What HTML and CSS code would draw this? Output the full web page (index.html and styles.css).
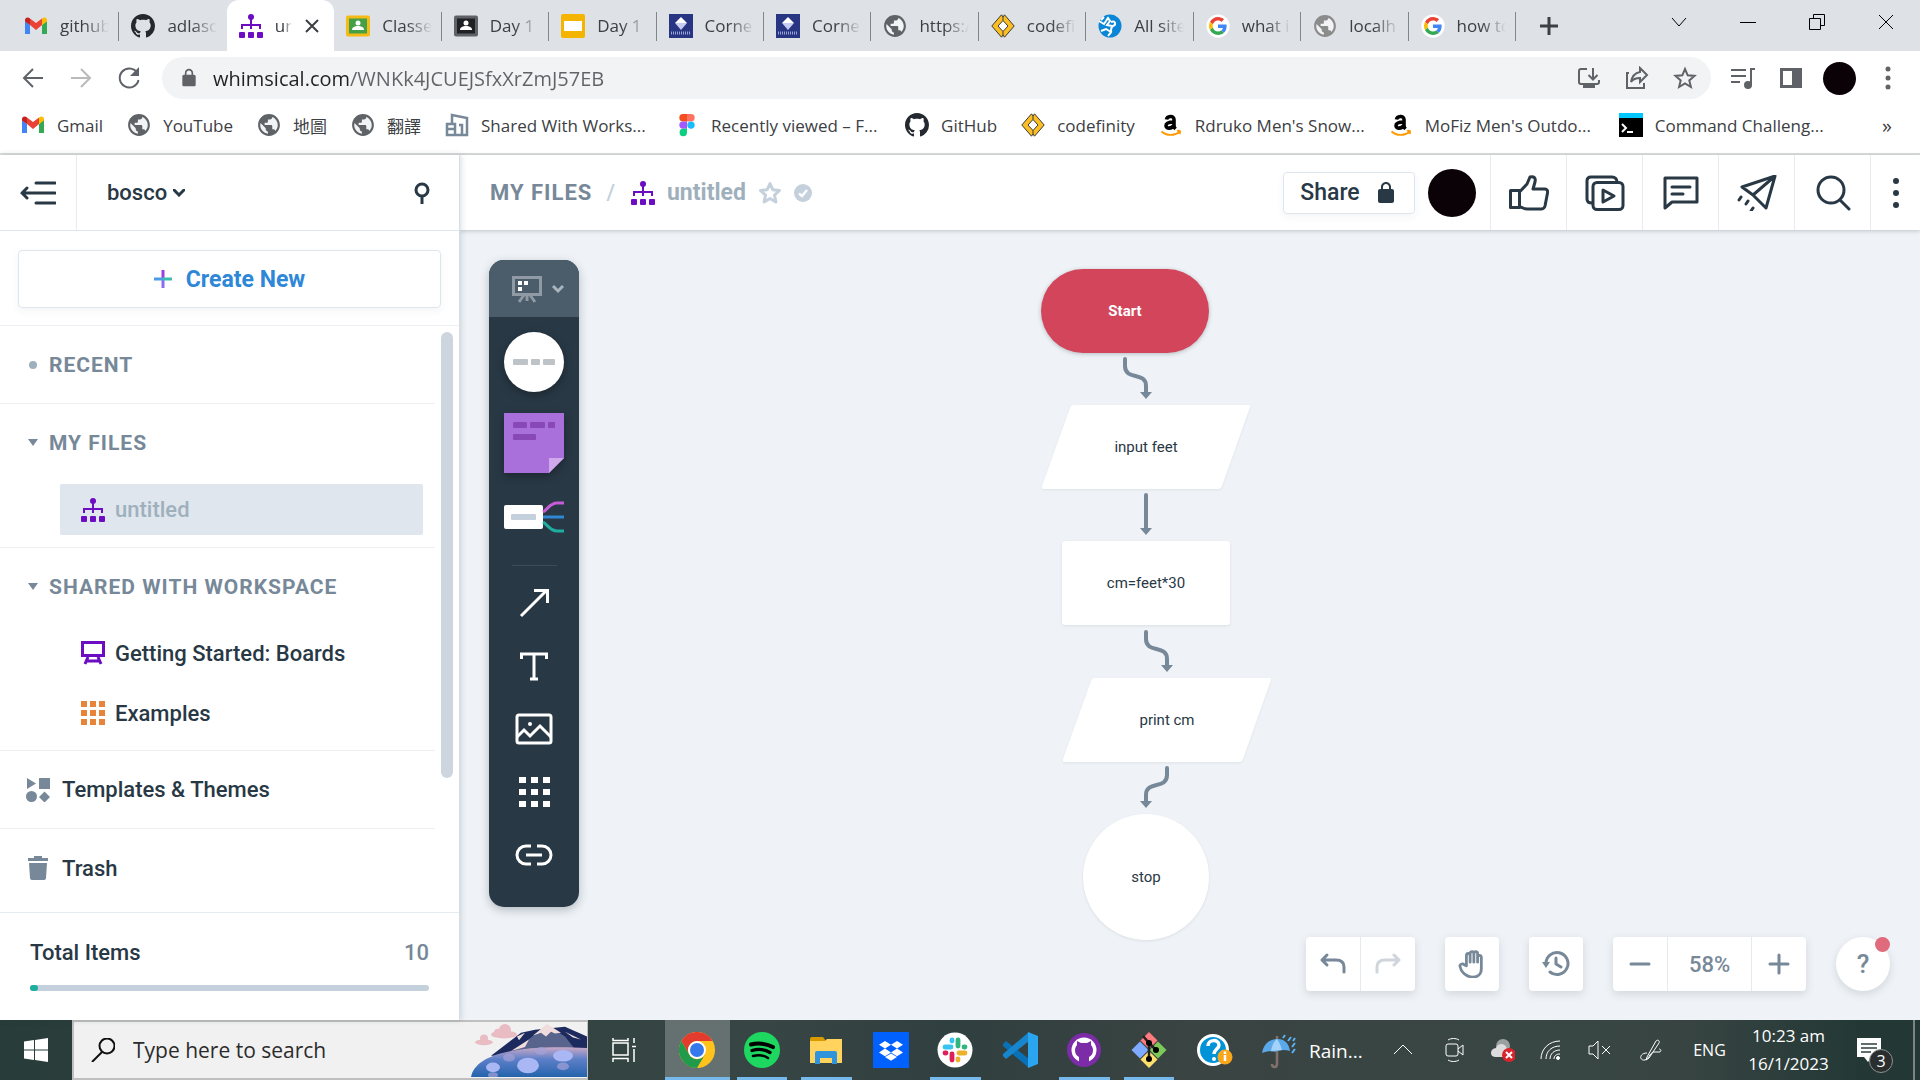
FILE: index.html
```html
<!DOCTYPE html>
<html lang="en">
<head>
<meta charset="utf-8">
<title>untitled</title>
<link rel="stylesheet" href="styles.css">
</head>
<body>
<svg class="defs" aria-hidden="true">
  <symbol id="gmail" viewBox="0 0 24 24"><path fill="#4285f4" d="M1 6v14h5v-9L1 7z"/><path fill="#34a853" d="M18 11v9h5V6z"/><path fill="#ea4335" d="M6 4.500l6 4.500 6-4.500V11l-6 5-6-5z"/><path fill="#c5221f" d="M1 6c0-2.500 3-3.500 5-1.500V11L1 7.500z"/><path fill="#fbbc04" d="M23 6c0-2.500-3-3.500-5-1.500V11l5-3.500z"/></symbol>
  <symbol id="github" viewBox="0 0 16 16"><path d="M8 0C3.580 0 0 3.580 0 8c0 3.540 2.290 6.530 5.470 7.590.4.070.55-.17.55-.38 0-.19-.01-.82-.01-1.490-2.010.37-2.530-.49-2.690-.94-.09-.23-.48-.94-.82-1.130-.28-.15-.68-.52-.01-.53.63-.01 1.080.58 1.230.82.72 1.210 1.870.87 2.330.66.07-.52.28-.87.51-1.070-1.780-.2-3.640-.89-3.640-3.950 0-.87.31-1.590.82-2.150-.08-.2-.36-1.020.08-2.120 0 0 .67-.21 2.200.82.64-.18 1.320-.27 2-.27s1.360.09 2 .27c1.530-1.040 2.200-.82 2.200-.82.44 1.100.16 1.920.08 2.120.51.56.82 1.270.82 2.150 0 3.070-1.870 3.750-3.650 3.950.29.25.54.73.54 1.480 0 1.070-.01 1.930-.01 2.200 0 .21.15.46.55.38A8.010 8.010 0 0 0 16 8c0-4.420-3.580-8-8-8z"/></symbol>
  <symbol id="flow" viewBox="0 0 24 24"><circle cx="12" cy="3" r="3"/><path d="M11 5h2v5h9v5h-2v-3h-7v3h-2v-3H4v3H2v-5h9z"/><rect x="0" y="18" width="6" height="6" rx="1"/><rect x="9" y="18" width="6" height="6" rx="1"/><rect x="18" y="18" width="6" height="6" rx="1"/></symbol>
  <symbol id="globe" viewBox="1 1 22 22"><circle cx="12" cy="12" r="9" fill="#f1f3f4"/><path d="M12 2C6.480 2 2 6.480 2 12s4.480 10 10 10 10-4.480 10-10S17.520 2 12 2zm-1 17.930c-3.950-.49-7-3.850-7-7.930 0-.62.08-1.210.21-1.790L9 15v1c0 1.100.9 2 2 2v1.930zm6.900-2.540c-.26-.81-1-1.390-1.900-1.390h-1v-3c0-.55-.45-1-1-1H8v-2h2c.55 0 1-.45 1-1V7h2c1.100 0 2-.9 2-2v-.41c2.930 1.190 5 4.060 5 7.410 0 2.080-.8 3.970-2.100 5.390z"/></symbol>
  <symbol id="codef" viewBox="0 0 24 24"><path fill="#fbbf24" stroke="#3a3a3a" d="M10.500.800L.800 12l9.700 11.200L12 21l1.500 2.200L23.200 12 13.500.800 12 3z"/><path fill="#fff" stroke="#3a3a3a" d="M12 6.500L7 12l5 5.500 5-5.500z"/><path stroke="#3a3a3a" d="M12 3v3.500M12 17.500V21"/></symbol>
  <symbol id="amazon" viewBox="0 0 24 24"><path fill="none" stroke="#000" stroke-width="3.600" d="M7.500 6.500C8 3 15 2 15 6.500V13c0 1.500.5 2 1.500 3M15 9c-4 0-8 .5-8 3.700s5.500 3.500 8-.7"/><path fill="none" stroke="#ff9900" stroke-width="1.800" d="M2.500 18.500c5 4.500 13 4.500 18 .5M18 18c3-1 4 0 2.500 3"/></symbol>
  <symbol id="google" viewBox="0 0 64 64"><circle cx="32" cy="32" r="31" fill="#fff"/><g transform="translate(8 8)"><path fill="#ea4335" d="M24 9.500c3.540 0 6.710 1.220 9.210 3.600l6.850-6.850C35.900 2.380 30.470 0 24 0 14.620 0 6.510 5.380 2.560 13.220l7.980 6.190C12.430 13.720 17.740 9.500 24 9.500z"/><path fill="#4285f4" d="M46.980 24.550c0-1.570-.15-3.090-.38-4.550H24v9.020h12.940c-.58 2.960-2.260 5.480-4.780 7.180l7.730 6c4.510-4.180 7.090-10.360 7.090-17.650z"/><path fill="#fbbc05" d="M10.530 28.590c-.48-1.450-.76-2.990-.76-4.590s.27-3.140.76-4.590l-7.980-6.190C.92 16.460 0 20.120 0 24c0 3.880.92 7.540 2.560 10.780l7.970-6.190z"/><path fill="#34a853" d="M24 48c6.480 0 11.930-2.130 15.890-5.810l-7.730-6c-2.150 1.450-4.920 2.300-8.160 2.300-6.260 0-11.570-4.220-13.470-9.910l-7.980 6.190C6.510 42.620 14.620 48 24 48z"/></g></symbol>
  <symbol id="corner" viewBox="0 0 24 24"><path fill="#283583" d="M0 0h24v24H0z"/><path fill="#fff" d="M12 3L6 9h12z"/><path fill="#c6cdf0" d="M6 9h12l-6 7z"/><path fill="none" stroke="#9aa3d6" stroke-dasharray="1 1" stroke-width="3" d="M2 19h20"/></symbol>
  <symbol id="class-green" viewBox="0 0 24 24"><rect width="24" height="21" y="1.500" rx="2" fill="#f5ba15"/><path fill="#43a047" d="M3 4.500h18v15H3z"/><circle cx="12" cy="9" r="2.500" fill="#fff"/><path fill="#fff" d="M6 16c0-3 3-4 6-4s6 1 6 4z"/></symbol>
  <symbol id="class-dark" viewBox="0 0 24 24"><rect width="24" height="21" y="1.500" rx="2" fill="#5f6368"/><path fill="#202124" d="M3 4.500h18v15H3z"/><circle cx="12" cy="9" r="2.500" fill="#fff"/><path fill="#fff" d="M6 16c0-3 3-4 6-4s6 1 6 4z"/></symbol>
  <symbol id="lock" viewBox="0 0 24 24"><path d="M18 8h-1V6c0-2.760-2.240-5-5-5S7 3.240 7 6v2H6c-1.100 0-2 .9-2 2v10c0 1.100.9 2 2 2h12c1.100 0 2-.9 2-2V10c0-1.100-.9-2-2-2zM9 8V6c0-1.660 1.340-3 3-3s3 1.340 3 3v2z"/></symbol>
</svg>

<header class="browser">
  <div class="tabstrip">
    <nav class="tabs" aria-label="Tabs">
      <button class="tab"><svg class="i24"><use href="#gmail"/></svg><span>github</span></button>
      <button class="tab no-line"><svg class="i24 gh"><use href="#github"/></svg><span>adlasc</span></button>
      <button class="tab active"><svg class="i24 purple"><use href="#flow"/></svg><span>unt</span><svg class="i16 close" viewBox="0 0 16 16"><path d="M2 2l12 12M14 2L2 14"/></svg></button>
      <button class="tab"><svg class="i24"><use href="#class-green"/></svg><span>Classe</span></button>
      <button class="tab"><svg class="i24"><use href="#class-dark"/></svg><span>Day 1</span></button>
      <button class="tab"><svg class="i24" viewBox="0 0 24 24"><rect width="24" height="24" rx="2" fill="#f5b400"/><path fill="#fff" d="M3 7h18v10H3z"/></svg><span>Day 1</span></button>
      <button class="tab"><svg class="i24"><use href="#corner"/></svg><span>Corne</span></button>
      <button class="tab"><svg class="i24"><use href="#corner"/></svg><span>Corne</span></button>
      <button class="tab"><svg class="i24 grey"><use href="#globe"/></svg><span>https:/</span></button>
      <button class="tab"><svg class="i24"><use href="#codef"/></svg><span>codefi</span></button>
      <button class="tab"><svg class="i24" viewBox="0 0 24 24"><circle cx="12" cy="12" r="11.500" fill="#0b86d6"/><path fill="none" stroke="#fff" stroke-width="2" d="M1 7l5 3 4-6 2 3-3 4 5 1M3 17l5-2 5 3-3 4M13 8c5-2 5 3 2 4s-1 5-3 8M6 3l-3 3"/></svg><span>All site</span></button>
      <button class="tab"><svg class="i24"><use href="#google"/></svg><span>what i</span></button>
      <button class="tab"><svg class="i24 light"><use href="#globe"/></svg><span>localh</span></button>
      <button class="tab"><svg class="i24"><use href="#google"/></svg><span>how to</span></button>
    </nav>
    <button class="newtab" aria-label="New tab"><svg class="i20" viewBox="0 0 20 20"><path d="M10 1v18M1 10h18"/></svg></button>
    <div class="wincontrols">
      <button aria-label="Search tabs"><svg class="i16" viewBox="0 0 16 16"><path d="M1 4l7 8 7-8"/></svg></button>
      <button aria-label="Minimize"><svg class="i16" viewBox="0 0 16 16"><path d="M0 8.500h16"/></svg></button>
      <button aria-label="Restore"><svg class="i16" viewBox="0 0 16 16"><path d="M.5 4.500h11v11H.5zM4.500 4V.5h11v11H12"/></svg></button>
      <button aria-label="Close"><svg class="i16" viewBox="0 0 16 16"><path d="M1 1l14 14M15 1L1 15"/></svg></button>
    </div>
  </div>

  <div class="toolbar">
    <button aria-label="Back"><svg class="i24 st" viewBox="0 0 24 24"><path d="M22 12H3M12 3l-9 9 9 9"/></svg></button>
    <button aria-label="Forward"><svg class="i24 st dim" viewBox="0 0 24 24"><path d="M2 12h19M12 3l9 9-9 9"/></svg></button>
    <button aria-label="Reload"><svg class="i24 st" viewBox="0 0 24 24"><path d="M20 6.500A9.500 9.500 0 1 0 21.500 14"/><path fill="#5f6368" stroke="none" d="M22 1v9h-9z"/></svg></button>
    <div class="omnibox">
      <svg class="i20 grey"><use href="#lock"/></svg>
      <input class="url" aria-label="Address" value="whimsical.com/WNKk4JCUEJSfxXrZmJ57EB">
      <button aria-label="Install"><svg class="i24 st" viewBox="0 0 24 24"><path d="M10 3H4a2 2 0 0 0-2 2v11a2 2 0 0 0 2 2h16a2 2 0 0 0 2-2v-2M16 2v11M11.500 9l4.500 4.500L20.500 9"/><path stroke-width="4" d="M6 20h12"/></svg></button>
      <button aria-label="Share page"><svg class="i24 st" viewBox="0 0 24 24"><path d="M4 7H2v15h17v-5M15 2l7 7-7 7v-4c-4 0-7 1-9 4 1-6 4-9 9-10z"/></svg></button>
      <button aria-label="Bookmark"><svg class="i24 st" viewBox="0 0 24 24"><path d="M12 3l2.700 6.300 6.800.6-5.200 4.500 1.600 6.600-5.900-3.500L6.100 21l1.600-6.600-5.200-4.500 6.800-.6z"/></svg></button>
    </div>
    <button aria-label="Media"><svg class="i24 st" viewBox="0 0 24 24"><path d="M0 4h15M0 10h15M0 16h9M20 20V3h4"/><circle cx="17" cy="19" r="3" fill="#5f6368"/></svg></button>
    <button aria-label="Side panel"><svg class="i24" viewBox="0 0 24 24"><path fill="#5f6368" d="M1 2h22v20H1zm3 3v14h9V5z" fill-rule="evenodd"/></svg></button>
    <button class="avatar small" aria-label="Profile"></button>
    <button aria-label="Menu"><svg class="i24" viewBox="0 0 24 24" fill="#5f6368"><circle cx="12" cy="3" r="2.500"/><circle cx="12" cy="12" r="2.500"/><circle cx="12" cy="21" r="2.500"/></svg></button>
  </div>

  <nav class="bookmarks" aria-label="Bookmarks">
    <a href="#"><svg class="i24"><use href="#gmail"/></svg><span>Gmail</span></a>
    <a href="#"><svg class="i24 grey"><use href="#globe"/></svg><span>YouTube</span></a>
    <a href="#"><svg class="i24 grey"><use href="#globe"/></svg><span>地圖</span></a>
    <a href="#"><svg class="i24 grey"><use href="#globe"/></svg><span>翻譯</span></a>
    <a href="#"><svg class="i24" viewBox="0 0 24 24" fill="none" stroke="#778899" stroke-width="2.500"><path d="M7 11V2l15 3v17H2V11h8v11M3 16h7M14 12h3v10"/></svg><span class="long">Shared With Works...</span></a>
    <a href="#"><svg class="i24" viewBox="0 0 24 24"><path fill="#f24e1e" d="M12 1H8a3.700 3.700 0 0 0 0 7.400h4z"/><path fill="#ff7262" d="M12 1h4a3.700 3.700 0 0 1 0 7.400h-4z"/><path fill="#a259ff" d="M12 8.400H8a3.700 3.700 0 0 0 0 7.400h4z"/><circle cx="16" cy="12.100" r="3.700" fill="#1abcfe"/><path fill="#0acf83" d="M12 15.800H8a3.700 3.700 0 1 0 4 3.700z"/></svg><span class="long">Recently viewed – F...</span></a>
    <a href="#"><svg class="i24 gh"><use href="#github"/></svg><span>GitHub</span></a>
    <a href="#"><svg class="i24"><use href="#codef"/></svg><span>codefinity</span></a>
    <a href="#"><svg class="i24"><use href="#amazon"/></svg><span class="long">Rdruko Men's Snow...</span></a>
    <a href="#"><svg class="i24"><use href="#amazon"/></svg><span class="long">MoFiz Men's Outdo...</span></a>
    <a href="#"><svg class="i24" viewBox="0 0 24 24"><path d="M0 0h24v24H0z"/><path fill="#00c8ff" d="M0 0h24v5H0z"/><path fill="none" stroke="#fff" stroke-width="2" d="M3 11l4 4-4 4M8 19h6"/></svg><span class="long">Command Challeng...</span></a>
    <button class="more">»</button>
  </nav>
</header>

<div class="app">
  <aside class="sidebar">
    <div class="side-head">
      <button class="collapse" aria-label="Collapse sidebar"><svg viewBox="0 0 36 24"><path d="M16 2h19M2 12h33M16 22h19M7 7l-5 5 5 5"/></svg></button>
      <button class="workspace">bosco <svg viewBox="0 0 12 8"><path d="M1 1l5 5 5-5"/></svg></button>
      <button class="pin" aria-label="Pin"><svg viewBox="0 0 16 22"><circle cx="8" cy="8" r="6"/><path d="M8 14v8"/></svg></button>
    </div>
    <div class="create-wrap">
      <button class="create"><svg viewBox="0 0 18 18"><path stroke="#9f3fe0" d="M9 0v8"/><path stroke="#8b6cf0" d="M9 10v8"/><path stroke="#4b9be6" d="M0 9h9"/><path stroke="#3bbcac" d="M9 9h9"/></svg>Create New</button>
    </div>
    <div class="side-body">
      <div class="tree">
        <section class="group"><h2><i class="dot"></i>RECENT</h2></section>
        <section class="group"><h2><i class="caret"></i>MY FILES</h2>
          <a class="file selected" href="#"><svg class="i24 purple"><use href="#flow"/></svg>untitled</a></section>
        <section class="group"><h2><i class="caret"></i>SHARED WITH WORKSPACE</h2>
          <div class="files">
          <a class="file" href="#"><svg class="i24" viewBox="0 0 24 24" fill="none" stroke="#6c0dc4" stroke-width="3"><path d="M1.500 1.500h21v13h-21zM7 16l-3 7M17 16l3 7M6 20h12"/></svg>Getting Started: Boards</a>
          <a class="file" href="#"><svg class="i24" viewBox="0 0 24 24" fill="#e8833a"><path d="M0 0h6v6H0zM9 0h6v6H9zM18 0h6v6h-6zM0 9h6v6H0zM9 9h6v6H9zM18 9h6v6h-6zM0 18h6v6H0zM9 18h6v6H9zM18 18h6v6h-6z"/></svg>Examples</a></div></section>
        <a class="group link" href="#"><svg class="i24" viewBox="0 0 24 24"><path d="M1 0l9 5.500L1 11zM13 0h11v11H13zM18.500 13.500L24 19l-5.500 5.500L13 19z"/><circle cx="5.500" cy="18.500" r="5.500"/></svg>Templates &amp; Themes</a>
        <a class="group link" href="#"><svg class="i24" viewBox="0 0 24 24"><path d="M8 0h8v2h6v3H2V2h6zM3 7h18l-1 15a2 2 0 0 1-2 2H6a2 2 0 0 1-2-2z"/></svg>Trash</a>
      </div>
      <div class="scroll"><div class="thumb"></div></div>
    </div>
    <div class="usage">
      <label for="items">Total Items<b>10</b></label>
      <progress id="items" value="2" max="100"></progress>
    </div>
  </aside>

  <main class="main">
    <div class="doc-head">
      <nav class="crumbs" aria-label="Breadcrumb">
        <a class="root" href="#">MY FILES</a><span class="slash">/</span>
        <svg class="i24 purple"><use href="#flow"/></svg><a class="doc" href="#">untitled</a>
        <svg class="i24 star" viewBox="0 0 24 24"><path d="M12 2.500l2.800 6.200 6.700.8-5 4.600 1.400 6.900-5.900-3.500L6.100 21l1.400-6.900-5-4.600 6.700-.8z"/></svg>
        <svg class="i18" viewBox="0 0 18 18"><circle cx="9" cy="9" r="9" fill="#c4d0db"/><path fill="none" stroke="#fff" stroke-width="2.500" d="M5 9.500l3 2.500 5-6"/></svg>
      </nav>
      <button class="share">Share <svg class="i24"><use href="#lock"/></svg></button>
      <button class="avatar" aria-label="Account"></button>
      <div class="actions">
        <button aria-label="Vote"><svg viewBox="0 0 40 36"><path d="M1.500 15.500h9v17h-9zM10.500 17L18 9l3-7c4-1 6 1 5 5l-2 7h12c2 0 3 2 2.500 4L36 31c-.5 2-2 3-4 3H18c-4 0-4-2-7.500-2"/></svg></button>
        <button aria-label="Present"><svg viewBox="0 0 40 36"><path d="M7 28c-3 0-5-1-5-4V6c0-3 2-4 4-4h21c3 0 5 2 5 5"/><rect x="8" y="7.500" width="30" height="27" rx="4"/><path d="M18 15l11 6-11 6z"/></svg></button>
        <button aria-label="Comments"><svg viewBox="0 0 40 36"><path d="M4 3h32v24H11l-7 6zM11 12h18M11 19h11"/></svg></button>
        <button aria-label="Send"><svg viewBox="0 0 40 36"><path d="M38 1L5 12l11 8zM16 20L38 1l-9 32zM4 22l-2 3M11 26l-2 3M16 33l-2 3"/></svg></button>
        <button aria-label="Search"><svg viewBox="0 0 40 36"><circle cx="18" cy="15" r="13"/><path d="M27 25l9 9"/></svg></button>
        <button class="dots" aria-label="More"><svg viewBox="0 0 6 30"><circle cx="3" cy="3" r="3"/><circle cx="3" cy="15" r="3"/><circle cx="3" cy="27" r="3"/></svg></button>
      </div>
    </div>

    <div class="canvas">
      <div class="tools">
        <button class="mode" aria-label="Mode"><svg viewBox="0 0 52 28"><path stroke="#8f9aa4" d="M1.500 2.500h27v17h-27zM12 20l-5 7M18 20l5 7M15 20v6"/><path stroke="#a9b4be" d="M41 11l5 5 5-5"/><path fill="#fff" stroke="none" d="M6 6h4v4H6zM12 6h4v4h-4zM6 12h4v4H6z"/></svg></button>
        <button class="tool-big" aria-label="Shape"><svg viewBox="0 0 60 60"><circle cx="30" cy="30" r="30" fill="#fff"/><g fill="#bdc3c7"><rect x="9" y="27" width="15" height="6" rx="1"/><rect x="27" y="27" width="9" height="6" rx="1"/><rect x="39" y="27" width="12" height="6" rx="1"/></g></svg></button>
        <button class="tool-big" aria-label="Sticky note"><svg viewBox="0 0 60 60"><path fill="#a96fdb" d="M0 0h60v45L45 60H0z"/><path fill="#cfa9ec" d="M45 60V45h15z"/><g fill="#8848b8"><rect x="9" y="9" width="14" height="6" rx="1"/><rect x="26" y="9" width="15" height="6" rx="1"/><rect x="44" y="9" width="7" height="6" rx="1"/><rect x="9" y="21" width="23" height="6" rx="1"/></g></svg></button>
        <button class="tool-mind" aria-label="Mind map"><svg viewBox="0 0 60 30"><rect y="3" width="39" height="24" rx="2" fill="#fff"/><rect x="7" y="12" width="25" height="6" rx="1" fill="#c4d0db"/><g fill="none" stroke-width="3"><path stroke="#c75bd8" d="M39 10c5-3 7-9 14-9h7"/><path stroke="#2f87d8" d="M39 15h21"/><path stroke="#1eae9f" d="M39 20c5 3 7 9 14 9h7"/></g></svg></button>
        <hr>
        <button class="tool" aria-label="Connector"><svg viewBox="0 0 38 32"><path d="M6 29L31 4M19 3.500h13.500V16"/></svg></button>
        <button class="tool" aria-label="Text"><svg viewBox="0 0 38 32"><path d="M6.500 9V4h25v5M19 4v25M15 29h8"/></svg></button>
        <button class="tool" aria-label="Image"><svg viewBox="0 0 38 32"><rect x="2" y="2" width="34" height="28" rx="2"/><path d="M2 24l7-7 6 6L25 13l11 11"/><circle cx="15" cy="11" r="2" fill="#fff" stroke="none"/></svg></button>
        <button class="tool" aria-label="Icons"><svg viewBox="0 0 38 32"><path fill="#fff" stroke="none" d="M4 1h7v6H4zM16 1h7v6h-7zM28 1h7v6h-7zM4 13h7v6H4zM16 13h7v6h-7zM28 13h7v6h-7zM4 25h7v6H4zM16 25h7v6h-7zM28 25h7v6h-7z"/></svg></button>
        <button class="tool" aria-label="Link"><svg viewBox="0 0 38 32"><path d="M16 7h-5a9 9 0 0 0 0 18h5M22 7h5a9 9 0 0 1 0 18h-5M11 16h16"/></svg></button>
      </div>

      <svg class="wires" viewBox="0 0 240 560" aria-hidden="true">
        <g fill="none" stroke="#778899" stroke-width="4" stroke-linecap="round">
          <path d="M85 30v7c0 15 21 5 21 20v7M106 166v34M106 303v7c0 15 21 5 21 20v7M127 439v7c0 15-21 5-21 20v7"/>
        </g>
        <path fill="#778899" d="M100 63h12l-6 7zM100 199h12l-6 7zM121 336h12l-6 7zM100 472h12l-6 7z"/>
      </svg>
      <div class="node start">Start</div>
      <div class="node slant input"><svg viewBox="0 0 210 84"><path d="M33 0h174q3 0 2 2L181 81q-1 3-4 3H3q-3 0-2-3L29 3q1-3 4-3z"/></svg><span>input feet</span></div>
      <div class="node calc">cm=feet*30</div>
      <div class="node slant print"><svg viewBox="0 0 210 84"><path d="M33 0h174q3 0 2 2L181 81q-1 3-4 3H3q-3 0-2-3L29 3q1-3 4-3z"/></svg><span>print cm</span></div>
      <div class="node stop">stop</div>

      <div class="controls">
        <div class="cgroup"><button aria-label="Undo"><svg viewBox="0 0 28 24"><path d="M8 3L3 8l5 5M3 8h14c5 0 8 2 8 7v5"/></svg></button><button class="off" aria-label="Redo"><svg viewBox="0 0 28 24"><path d="M20 3l5 5-5 5M25 8H11c-5 0-8 2-8 7v5"/></svg></button></div>
        <div class="cgroup"><button aria-label="Pan"><svg viewBox="0 0 30 30"><path d="M9 17V6c0-3 4-3 4 0v7V4c0-3 4-3 4 0v9V4c0-3 4-3 4 0v9V8c0-3 4-3 4 0v12c0 6-4 9-9 9-8 0-13-6-14-12 0-2 3-3 5-1z"/></svg></button></div>
        <div class="cgroup"><button aria-label="History"><svg viewBox="0 0 28 28"><path d="M4 14a11 11 0 1 1 4 8M14 8v6l5 3"/><path fill="#778899" stroke="none" d="M0 12h8l-4 6z"/></svg></button></div>
        <div class="cgroup zoom"><button aria-label="Zoom out"><svg viewBox="0 0 28 24"><path d="M5 12h18"/></svg></button><button class="pct">58%</button><button aria-label="Zoom in"><svg viewBox="0 0 28 24"><path d="M5 12h18M14 3v18"/></svg></button></div>
        <button class="help">?<i class="badge"></i></button>
      </div>
    </div>
  </main>
</div>

<footer class="taskbar">
  <button class="winstart" aria-label="Start"><svg class="i24" viewBox="0 0 24 24" fill="#fff"><path d="M0 3.500l10-1.500v9.500H0zM11 2l13-2v11.500H11zM0 12.500h10V22L0 20.500zM11 12.500h13V24l-13-2z"/></svg></button>
  <label class="search">
    <svg class="i24" viewBox="0 0 24 24"><circle cx="16" cy="8" r="7.500"/><path d="M11 14L1 24"/></svg>
    <input type="text" placeholder="Type here to search" aria-label="Type here to search">
    <svg class="scene" viewBox="0 0 116 56" preserveAspectRatio="none">
      <defs><linearGradient id="lake" x1="0" y1="0" x2="0" y2="1"><stop offset="0" stop-color="#c9a9c8"/><stop offset=".4" stop-color="#5d7fc8"/><stop offset="1" stop-color="#2464ac"/></linearGradient></defs>
      <g fill="#e9bcc4"><ellipse cx="33" cy="12" rx="13" ry="4"/><circle cx="34" cy="7" r="6"/><circle cx="27" cy="10" r="4"/><ellipse cx="13" cy="20" rx="9" ry="3"/><circle cx="13" cy="16" r="4"/></g>
      <path fill="#1c2a5e" d="M20 34l30-24 14-3 30-3 22 10v22z"/><path fill="#59648c" d="M44 28L76 2l18 12 12 16z"/><path fill="#f0dcdc" d="M62 13L76 1l14 9-6 1-4-2-5 5-5-4zM46 14l8-4-6 8zM58 17l-18 12 14-4zM94 9l16 8-8-2z"/>
      <path fill="url(#lake)" d="M0 56C4 34 40 22 116 26v30z"/>
      <g fill="#a9b7f4"><ellipse cx="22" cy="46" rx="7" ry="5"/><ellipse cx="57" cy="44" rx="11" ry="8"/><ellipse cx="92" cy="34" rx="10" ry="6"/></g><g fill="#a5a2d8" opacity=".7"><ellipse cx="38" cy="36" rx="6" ry="4"/><ellipse cx="70" cy="29" rx="6" ry="4"/><ellipse cx="22" cy="54" rx="5" ry="3"/><ellipse cx="92" cy="45" rx="6" ry="4"/></g>
    </svg>
  </label>
  <button class="taskview" aria-label="Task view"><svg class="i24" viewBox="0 0 24 24" fill="none" stroke="#fff" stroke-width="1.500"><path d="M1 5h15v12H1zM1 0v2.500h15V0M1 24v-3.500h15V24M22 0v5M22 11v13M20 8.500h4"/></svg></button>
  <nav class="apps" aria-label="Apps">
    <button class="on current" aria-label="Chrome"><svg viewBox="0 0 36 36"><circle cx="18" cy="18" r="18" fill="#ffc31c"/><path fill="#e33b2e" d="M2.400 9A18 18 0 0 1 33.600 9H18a9 9 0 0 0-8 13z"/><path fill="#219a4b" d="M2.400 9A18 18 0 0 0 18 36l8-13.500A9 9 0 0 1 10 22z"/><circle cx="18" cy="18" r="9" fill="#fff"/><circle cx="18" cy="18" r="7" fill="#3478ec"/></svg></button>
    <button class="on" aria-label="Spotify"><svg viewBox="0 0 36 36"><circle cx="18" cy="18" r="18" fill="#1ed760"/><g fill="none" stroke="#000" stroke-linecap="round"><path stroke-width="4" d="M7 12.500c8-2 15-1 22 2.500"/><path stroke-width="3.300" d="M8 18.500c7-2 13-1 18 2"/><path stroke-width="2.600" d="M9 24c6-1.500 11-.7 15 2"/></g></svg></button>
    <button class="on" aria-label="File Explorer"><svg viewBox="0 0 36 36"><path fill="#d99a00" d="M2 7a2 2 0 0 1 2-2h11l3 4v4H2z"/><path fill="#ffd35e" d="M2 11V9h15l2-2h15v24H2z"/><path fill="#2f94dc" d="M7 31V21a2 2 0 0 1 2-2h18a2 2 0 0 1 2 2v11h-5v-6H12v6H7z"/></svg></button>
    <button aria-label="Dropbox"><svg viewBox="0 0 36 36"><path fill="#0061ff" d="M0 0h36v36H0z"/><path fill="#fff" d="M12 9l6 3.800-6 3.800-6-3.800zM24 9l6 3.800-6 3.800-6-3.800zM12 16.600l6 3.800-6 3.800-6-3.800zM24 16.600l6 3.800-6 3.800-6-3.800zM18 21.500l6 3.500-6 3.800-6-3.800z"/></svg></button>
    <button class="on" aria-label="Slack"><svg viewBox="0 0 36 36"><circle cx="18" cy="18" r="17.500" fill="#fff"/><g fill="none" stroke-width="4.800" stroke-linecap="round"><path stroke="#36c5f0" d="M8 15h6M15 8v1"/><path stroke="#2eb67d" d="M21 8v6M28 15h-1"/><path stroke="#ecb22e" d="M22 21h6M21 28v-1"/><path stroke="#e01e5a" d="M15 22v6M8 21h1"/></g></svg></button>
    <button aria-label="Visual Studio Code"><svg viewBox="0 0 36 36"><path fill="#0871b8" d="M1 12l3-3 23 18v9L1 14z"/><path fill="#1786cf" d="M1 24l3 3 23-18V0L1 22z"/><path fill="#2aa6f0" d="M26 0l10 4v28l-10 4z"/></svg></button>
    <button class="on" aria-label="GitHub Desktop"><svg viewBox="0 0 36 36"><circle cx="18" cy="18" r="17" fill="#7d2ca8"/><circle cx="18" cy="18" r="12.500" fill="#fff"/><path fill="#7d2ca8" d="M13 31v-6c-2-1-4-3-4-7 0-2 1-4 2-5v-4l4 2h6l4-2v4c1 1 2 3 2 5 0 4-2 6-4 7v6c-3 1-7 1-10 0z"/></svg></button>
    <button class="on" aria-label="Git"><svg viewBox="0 0 36 36"><path fill="#ff7a7f" d="M18 0l8.500 8.500L18 17 9.500 8.500z"/><path fill="#7eaaff" d="M9 9.500l8.500 8.500L9 26.500.5 18z"/><path fill="#7cc95a" d="M27 9.500l8.500 8.500-8.500 8.500-8.500-8.500z"/><path fill="#ffe06c" d="M18 19l8.500 8.500L18 36l-8.500-8.500z"/><path fill="none" stroke="#222" stroke-width="2.500" d="M12 4l6 7v17M18 11l8 8"/><circle cx="18" cy="11" r="3"/><circle cx="18" cy="27" r="3"/><circle cx="25" cy="18" r="3"/></svg></button>
  </nav>
  <div class="tray">
    <button class="gethelp" aria-label="Get Help"><svg viewBox="0 0 36 36"><circle cx="16" cy="18" r="14.500" fill="#0093d8" stroke="#fff" stroke-width="3"/><path fill="none" stroke="#fff" stroke-width="3.500" d="M11 14c0-7 11-7 11-1 0 4-5 4-5 9"/><circle cx="17" cy="27" r="2" fill="#fff"/><circle cx="28" cy="25" r="7.500" fill="#f9a61a"/><path stroke="#fff" stroke-width="2.500" d="M28 23v6M28 19.500V22"/></svg></button>
    <button class="weather"><svg viewBox="0 0 36 36"><path fill="#5aa9ea" d="M1 20C3 9 10 6 17 6c6 0 11 4 12 12-6-2-10-1-14 1-5-1-9-1-14 1z"/><path fill="#a5d2f8" d="M10 18c1-6 3-10 6-12 3 4 4 8 5 11z"/><path fill="none" stroke="#83706c" stroke-width="2.500" d="M16 18v13c0 4-5 4-5 0M16 6V3"/><path stroke="#5db1f5" stroke-width="2" d="M22 5l2-3M27 8l3-4M32 8l2-3M31 14l3-4M31 20l3-4"/></svg>Rain...</button>
    <button class="up" aria-label="Hidden icons"><svg class="i20 wt" viewBox="0 0 20 20"><path d="M1 14l9-9 9 9"/></svg></button>
    <button class="status" aria-label="Meet now"><svg class="i24 wt" viewBox="0 0 24 24"><rect x="3" y="6" width="12" height="12" rx="2"/><path d="M15 11l5-4v10l-5-4M5 2c3-2 8-2 11 0M5 22c3 2 8 2 11 0"/></svg></button>
    <button class="status" aria-label="OneDrive"><svg class="i24" viewBox="0 0 24 24"><circle cx="12" cy="8" r="7" fill="#9aa09f"/><path fill="#dcdcdc" d="M4 19c-6 0-5-9 1-9 2-6 10-5 11 1 4 0 5 8 0 8z"/><circle cx="18" cy="17" r="7" fill="#d9242c"/><path stroke="#fff" stroke-width="2" d="M15 14l6 6M21 14l-6 6"/></svg></button>
    <button class="status" aria-label="Network"><svg class="i24 wt" viewBox="0 0 24 24"><path d="M2 21C2 11 10 3 21 3M7 21c0-8 6-13 14-13M11 21c0-5 4-9 10-9M15 21c0-3 2-5 6-5"/><circle cx="19" cy="20" r="1.500" fill="#fff"/></svg></button>
    <button class="status" aria-label="Volume"><svg class="i24 wt" viewBox="0 0 24 24"><path d="M2 8h4l5-5v18l-5-5H2zM15 8l8 8M23 8l-8 8"/></svg></button>
    <button class="pen" aria-label="Pen"><svg class="i24 wt" viewBox="0 0 24 24"><path d="M8 19L17 3c2-2 4 0 3 2L10 20l-3 2zM8 15c-8 0-8 8-2 7 4-1 4-6 8-8h7c2-2 0-3-1-3"/></svg></button>
    <button class="lang">ENG</button>
    <button class="clock"><span>10:23 am</span><span>16/1/2023</span></button>
    <button class="notif" aria-label="Notifications"><svg class="i24" viewBox="0 0 24 24"><path fill="#fff" d="M0 0h24v19h-9l-4 5-4-5H0z"/><path stroke="#2d403d" stroke-width="1.500" d="M4 6h16M4 10h16M4 14h10"/></svg><i class="count">3</i></button>
    <i class="peek"></i>
  </div>
</footer>
</body>
</html>
```
FILE: styles.css
```css
* { box-sizing: border-box; }
html, body { margin: 0; }
body { min-height: 100vh; display: flex; flex-direction: column; font-family: "Open Sans", "Noto Sans CJK TC", sans-serif; font-size: 17px; color: #3c4043; background: #fff; overflow-x: hidden; }
button { border: 0; padding: 0; margin: 0; background: none; font: inherit; color: inherit; display: flex; align-items: center; justify-content: center; }
a { color: inherit; text-decoration: none; }
input { border: 0; padding: 0; background: none; font: inherit; outline: 0; min-width: 0; }
i { font-style: normal; }
svg { flex: none; display: block; }
.defs { position: absolute; width: 0; height: 0; }
.i16 { width: 16px; height: 16px; }
.i18 { width: 18px; height: 18px; }
.i20 { width: 20px; height: 20px; }
.i24 { width: 24px; height: 24px; }
.purple { fill: #6c0dc4; }
.gh { fill: #24292f; }
.grey { fill: #5f6368; }
.light { fill: #8b8b8b; }
.st { fill: none; stroke: #5f6368; stroke-width: 2; }
.dim { stroke: #bababa; }
.wt { fill: none; stroke: #fff; stroke-width: 1; }

/* Browser chrome */
.browser { border-bottom: 2px solid #dadcdc; }
.tabstrip { display: flex; height: 51px; background: #dee1e6; padding-left: 12px; }
.tabs { flex: 1; display: grid; grid-template-columns: repeat(14, minmax(0, 1fr)); }
.tab { position: relative; justify-content: flex-start; gap: 12px; padding: 0 10px 0 12px; border-radius: 12px 12px 0 0; }
.tab span { flex: 1; overflow: hidden; white-space: nowrap; text-align: left; -webkit-mask-image: linear-gradient(90deg, #000 50%, transparent); mask-image: linear-gradient(90deg, #000 50%, transparent); }
.tab::after { content: ""; position: absolute; right: 0; top: 12px; width: 1px; height: 29px; background: #80868b; }
.tab.no-line::after, .tab.active::after { display: none; }
.tab.active { background: #fff; padding-right: 14px; }
.close { stroke: #3c4043; stroke-width: 2; }
.newtab { width: 66px; }
.newtab svg { stroke: #3c4043; stroke-width: 3; }
.wincontrols { display: flex; width: 338px; padding-bottom: 8px; justify-content: flex-end; }
.wincontrols button { width: 69px; }
.wincontrols svg { fill: none; stroke: #000; }
.toolbar { display: flex; align-items: center; gap: 24px; height: 54px; padding: 0 20px 0 21px; }
.omnibox { flex: 1; display: flex; align-items: center; gap: 24px; height: 42px; margin-right: -4px; margin-left: -3px; padding: 0 14px 0 17px; border-radius: 21px; background: #f1f3f4; }
.url { flex: 1; margin-left: -10px; font-size: 20px; height: 34px; color: #5f6368; -webkit-text-fill-color: transparent; background: linear-gradient(90deg, #202124 136px, #5f6368 136px); -webkit-background-clip: text; background-clip: text; }
.avatar { width: 48px; height: 48px; border-radius: 50%; background: #0b0207; }
.avatar.small { width: 33px; height: 33px; margin: 0 -4px; }
.bookmarks { display: flex; align-items: center; gap: 24px; height: 48px; padding: 0 20px 8px 21px; white-space: nowrap; }
.bookmarks a { display: flex; align-items: center; gap: 12px; min-width: 0; }
.bookmarks .long { width: 170px; }
.more { margin-left: auto; padding-right: 8px; font-size: 20px; }

/* Workspace */
.app { flex: 1; display: flex; font-family: Roboto, "Liberation Sans", sans-serif; font-weight: 500; font-size: 22px; color: #283845; background: #eff3f7; }
.sidebar { position: relative; width: 460px; display: flex; flex-direction: column; background: #fff; border-right: 1px solid #d6dde4; box-shadow: 1px 0 6px rgba(40, 56, 69, .18); z-index: 2; }
.side-head { display: flex; height: 76px; border-bottom: 1px solid #dfe5ed; }
.collapse { width: 77px; border-right: 1px solid #e8ecf2; }
.collapse svg { width: 36px; height: 24px; }
.collapse svg, .workspace svg, .pin svg { fill: none; stroke: #283845; stroke-width: 3; stroke-linecap: round; }
.workspace { padding-left: 30px; gap: 6px; }
.workspace svg { width: 12px; height: 8px; }
.pin { margin-left: auto; padding-right: 29px; }
.pin svg { width: 16px; height: 22px; stroke-linecap: butt; }
.create-wrap { padding: 19px 18px 17px; border-bottom: 1px solid #edf0f5; }
.create { width: 100%; height: 58px; gap: 14px; border: 1px solid #dfe5ed; border-radius: 4px; color: #2f87d8; font-size: 23px; font-weight: 700; box-shadow: 0 3px 8px rgba(40, 56, 69, .05); }
.create svg { width: 18px; height: 18px; fill: none; stroke-width: 3; }
.side-body { flex: 1; display: flex; }
.tree { flex: 1; }
.group { display: block; border-bottom: 1px solid #edf0f3; }
.group h2 { display: flex; align-items: center; height: 77px; margin: 0; padding-left: 28px; gap: 11px; font-size: 21px; font-weight: 700; letter-spacing: 1px; color: #778899; }
.dot { width: 8px; height: 8px; margin: 0 1px; border-radius: 50%; background: #9fb0bd; }
.caret { border: 5px solid transparent; border-top: 7px solid #778899; border-bottom: 0; }
.file { display: flex; align-items: center; gap: 10px; height: 60px; margin: 0 12px 0 60px; padding-left: 21px; border-radius: 2px; }
.file.selected { height: 51px; margin: 3px 12px 12px 60px; background: #dfe6ee; color: #9fb0bd; }
.files { margin-top: -2px; padding-bottom: 7px; }
.group.link { display: flex; align-items: center; gap: 12px; height: 78px; padding-left: 26px; }
.group.link svg { fill: #778899; }
.group.link:last-child { border: 0; }
.scroll { width: 24px; padding: 6px 6px 0; }
.thumb { height: 446px; border-radius: 6px; background: #cdd6de; }
.usage { height: 108px; padding: 26px 30px 0; border-top: 1px solid #e4ecf2; }
.usage label { display: flex; justify-content: space-between; height: 28px; line-height: 28px; }
.usage b { font-weight: 500; color: #778899; }
.usage progress { display: block; width: 100%; height: 6px; margin-top: 18px; appearance: none; -webkit-appearance: none; border: 0; }
.usage progress::-webkit-progress-bar { background: #c4d0db; border-radius: 3px; }
.usage progress::-webkit-progress-value { background: #1eae9f; border-radius: 3px; }
.main { flex: 1; display: flex; flex-direction: column; min-width: 0; }
.doc-head { display: flex; align-items: center; height: 75px; background: #fff; box-shadow: 0 1px 4px rgba(40, 56, 69, .25); z-index: 1; }
.crumbs { flex: 1; display: flex; align-items: center; gap: 12px; padding-left: 30px; }
.root { font-weight: 700; letter-spacing: 1px; color: #778899; }
.slash { color: #c4d0db; margin: 0 4px 0 2px; }
.doc { color: #9fb0bd; font-size: 23px; font-weight: 700; }
.star { fill: none; stroke: #c4d0db; stroke-width: 3; stroke-linejoin: round; }
.share { width: 132px; height: 42px; gap: 14px; border: 1px solid #dfe5ed; border-radius: 4px; font-size: 23px; box-shadow: 0 3px 8px rgba(40, 56, 69, .05); }
.share svg { fill: #283845; }
.doc-head .avatar { margin: 0 14px 0 13px; }
.actions { display: flex; align-self: stretch; }
.actions button { width: 76px; border-left: 1px solid #e8ecf2; }
.actions svg { width: 40px; height: 36px; fill: none; stroke: #283845; stroke-width: 3; stroke-linejoin: round; stroke-linecap: round; }
.actions .dots { width: 50px; }
.actions .dots svg { width: 6px; height: 30px; fill: #283845; stroke: none; }

/* Board */
.canvas { position: relative; flex: 1; overflow: hidden; }
.tools { position: absolute; left: 29px; top: 30px; width: 90px; height: 647px; display: flex; flex-direction: column; align-items: center; border-radius: 15px; background: #283845; box-shadow: 0 3px 10px rgba(40, 56, 69, .3); overflow: hidden; }
.mode { width: 100%; height: 57px; margin-bottom: 15px; padding-left: 8px; background: #4b5c6a; }
.mode svg { width: 52px; height: 28px; fill: none; stroke-width: 3; }
.tool-big { height: 60px; margin-bottom: 21px; filter: drop-shadow(0 3px 4px rgba(0, 0, 0, .3)); }
.tool-big svg { width: 60px; height: 60px; }
.tool-mind { margin: 8px 0 33px; }
.tool-mind svg { width: 60px; height: 30px; overflow: visible; }
.tools hr { width: 45px; height: 1px; border: 0; margin: 0 0 5px; background: #3c4b58; }
.tool { width: 100%; height: 63px; }
.tool svg { width: 38px; height: 32px; fill: none; stroke: #fff; stroke-width: 3; }
.wires { position: absolute; left: 580px; top: 99px; width: 240px; height: 560px; }
.node { position: absolute; display: flex; align-items: center; justify-content: center; width: 168px; height: 84px; font-size: 15px; font-weight: 400; background: #fff; box-shadow: 0 1px 3px rgba(40, 56, 69, .1); }
.start { left: 581px; top: 39px; border-radius: 42px; background: #d3455b; color: #fff; font-weight: 700; box-shadow: 0 1px 4px rgba(40, 56, 69, .3); }
.slant { width: 210px; background: none; box-shadow: none; }
.slant svg { position: absolute; width: 210px; height: 84px; fill: #fff; filter: drop-shadow(0 1px 1px rgba(40, 56, 69, .08)); }
.slant span { position: relative; }
.input { left: 581px; top: 175px; }
.calc { left: 602px; top: 311px; border-radius: 3px; }
.print { left: 602px; top: 448px; }
.stop { left: 623px; top: 584px; width: 126px; height: 126px; border-radius: 50%; }
.controls { position: absolute; right: 30px; bottom: 29px; display: flex; gap: 30px; color: #778899; }
.cgroup { display: flex; background: #fff; border-radius: 4px; box-shadow: 0 3px 9px rgba(40, 56, 69, .15); }
.cgroup button { width: 54px; height: 54px; }
.cgroup button + button { width: 55px; border-left: 1px solid #e4eaf0; }
.cgroup .pct.pct { width: 84px; }
.cgroup svg { width: 28px; height: 28px; fill: none; stroke: #778899; stroke-width: 3; stroke-linecap: round; stroke-linejoin: round; }
.cgroup .off svg { opacity: .35; }
.help { position: relative; width: 54px; height: 54px; border-radius: 50%; background: #fff; font-size: 26px; box-shadow: 0 3px 9px rgba(40, 56, 69, .15); }
.badge { position: absolute; right: 0; top: 0; width: 15px; height: 15px; border-radius: 50%; background: #df6b7c; }

/* Taskbar */
.taskbar { display: flex; height: 60px; color: #fff; background: linear-gradient(90deg, #283c39, #374644 40%, #303f3f 50%, #3a4442 62%, #384644 80%, #374442 88%, #233835 97%); }
.winstart { width: 72px; }
.search { flex: 0 1 516px; min-width: 0; display: flex; align-items: center; padding-left: 17px; border: 2px solid #bfbfbf; border-right: 1px solid #bfbfbf; background: #f1f1f1; color: #2b2b2b; }
.search > .i24 { fill: none; stroke: #111; stroke-width: 2; }
.search input { flex: 1; margin-left: 18px; font-size: 21px; height: 40px; color: #2b2b2b; }
.search input::placeholder { color: #2b2b2b; opacity: 1; }
.scene { width: 116px; height: 54px; }
.taskview { width: 77px; padding-right: 6px; }
.apps { flex: none; width: 516px; display: grid; grid-template-columns: repeat(8, 1fr); }
.apps button { position: relative; }
.apps svg, .gethelp svg, .weather svg { width: 36px; height: 36px; }
.apps .on::after { content: ""; position: absolute; left: 7px; right: 7px; bottom: 0; height: 3px; background: #76b9ed; }
.apps .current { background: #657170; }
.apps .current::after { left: 0; right: 0; }
.tray { flex: 1; display: flex; justify-content: flex-end; }
.gethelp { width: 68px; }
.weather { gap: 12px; justify-content: flex-start; width: 126px; padding: 2px 0 0 12px; font-size: 19px; }
.up { width: 56px; }
.status { width: 48px; }
.pen { width: 56px; }
.lang { width: 61px; font-size: 16px; }
.clock { width: 97px; flex-direction: column; gap: 4px; font-size: 17px; line-height: 24px; }
.notif { position: relative; width: 76px; padding-right: 12px; }
.count { position: absolute; right: 20px; top: 29px; width: 24px; height: 24px; border: 1px solid #8b9391; border-radius: 50%; background: #2a2e2e; font-size: 16px; line-height: 22px; text-align: center; }
.peek { width: 7px; border-left: 2px solid #7a8583; }
```
